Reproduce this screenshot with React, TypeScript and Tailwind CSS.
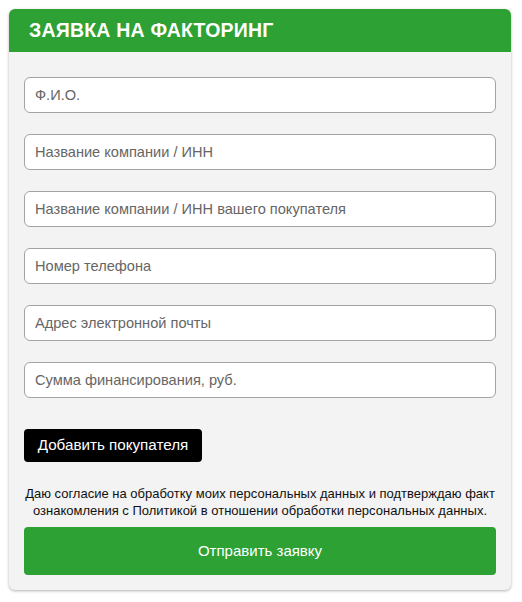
import { useState } from 'react'

const fields = [
  'Ф.И.О.',
  'Название компании / ИНН',
  'Название компании / ИНН вашего покупателя',
  'Номер телефона',
  'Адрес электронной почты',
  'Сумма финансирования, руб.',
]

export default function App() {
  const [values, setValues] = useState<string[]>(fields.map(() => ''))

  return (
    <div className="min-h-[602px] bg-white p-[9px]" style={{ fontFamily: '"Liberation Sans", Arial, sans-serif' }}>
      <div className="w-[502px] rounded-[6px] bg-[#f3f3f3] shadow-[0_1px_3px_rgba(0,0,0,0.3)] overflow-hidden">
        <div className="h-[43px] bg-[#2ea134] px-[20px] flex items-center">
          <h2 className="text-[19.5px] font-bold text-white tracking-[0.2px]">ЗАЯВКА НА ФАКТОРИНГ</h2>
        </div>

        <form className="px-[15px] pt-[25px] pb-[15px]" onSubmit={(e) => e.preventDefault()}>
          <div className="flex flex-col gap-[21px]">
            {fields.map((placeholder, i) => (
              <input
                key={placeholder}
                type="text"
                value={values[i]}
                placeholder={placeholder}
                onChange={(e) => {
                  const next = [...values]
                  next[i] = e.target.value
                  setValues(next)
                }}
                className="h-[36px] w-full rounded-[6px] border border-[#a3a3a3] bg-white px-[10px] text-[14.6px] text-[#222] placeholder:text-[#666] outline-none"
              />
            ))}
          </div>

          <button
            type="button"
            className="mt-[31px] h-[33px] w-[178px] rounded-[4px] bg-black text-[15.2px] text-white"
          >
            Добавить покупателя
          </button>

          <p className="mt-[23px] text-center text-[13px] leading-[17px] text-[#111]">
            Даю согласие на обработку моих персональных данных и подтверждаю факт
            <br />
            ознакомления с Политикой в отношении обработки персональных данных.
          </p>

          <button
            type="submit"
            className="mt-[8px] h-[48px] w-full rounded-[4px] bg-[#2ea134] text-[15px] text-white"
          >
            Отправить заявку
          </button>
        </form>
      </div>
    </div>
  )
}
